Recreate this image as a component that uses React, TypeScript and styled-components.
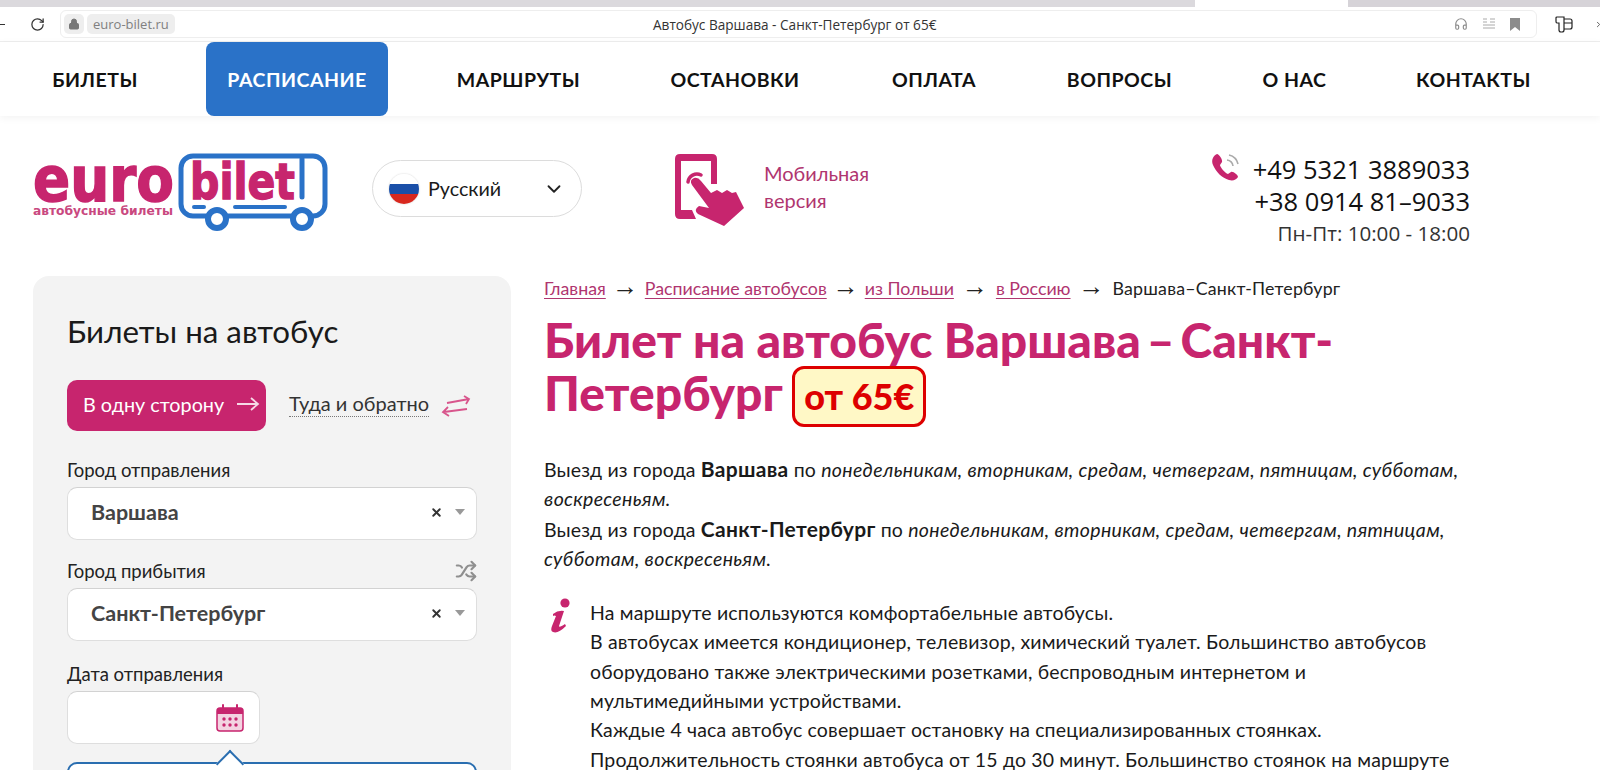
import React from 'react';
import styled, { createGlobalStyle } from 'styled-components';
import { ChevronDown, ChevronRight, Headphones, Lock, RotateCw, Shuffle, X } from 'lucide-react';

const BODY_FONT = `Lato, "Noto Sans", "Open Sans", sans-serif`;
const PINK = '#c7256e';
const BLUE = '#2a72c8';

const GlobalStyle = createGlobalStyle`
  html, body {
    margin: 0;
    padding: 0;
    height: 770px;
    overflow: hidden;
    background: #fff;
    font-family: ${BODY_FONT};
    color: #1a1a1a;
  }
  * { box-sizing: border-box; }
`;

const Page = styled.div`
  width: 1600px;
  height: 770px;
  overflow: hidden;
  display: flex;
  flex-direction: column;
`;

const TabStrip = styled.div`
  height: 7px;
  flex: none;
  display: flex;
  background: #d9d7db;
`;
const TabSpacer = styled.div<{ $w: number; $bg: string }>`
  width: ${({ $w }) => $w}px;
  background: ${({ $bg }) => $bg};
`;

const BrowserBar = styled.div`
  height: 35px;
  flex: none;
  display: flex;
  align-items: center;
  padding-left: 30px;
  background: #fff;
  border-bottom: 1px solid #eee;
  position: relative;
`;
const ReloadIcon = styled(RotateCw)`
  color: #333;
  margin-right: 15px;
  flex: none;
`;
const BackStub = styled.div`
  position: absolute;
  left: 0;
  top: 17px;
  width: 5px;
  height: 1px;
  background: #333;
`;
const EdgeChevron = styled(ChevronRight)`
  position: absolute;
  right: -3px;
  top: 13px;
  color: #333;
`;
const AddressBar = styled.div`
  width: 1477px;
  height: 28px;
  border: 1px solid #eeeeee;
  border-radius: 6px;
  display: flex;
  align-items: center;
  padding: 0 16px 0 3px;
  gap: 3px;
  position: relative;
  flex: none;
`;
const LockBox = styled.div`
  width: 20px;
  height: 20px;
  background: #eeeeee;
  border-radius: 5px;
  display: flex;
  align-items: center;
  justify-content: center;
  color: #777;
`;
const Domain = styled.div`
  background: #eeeeee;
  border-radius: 5px;
  height: 20px;
  padding: 0 6px;
  font: 13px/20px "Open Sans", sans-serif;
  color: #808080;
`;
const PageTitle = styled.div`
  position: absolute;
  left: 592px;
  font: 13.6px "Open Sans", sans-serif;
  color: #333;
`;
const BarIcons = styled.div`
  margin-left: auto;
  display: flex;
  align-items: center;
  gap: 14px;
  color: #8c8c8c;
`;
const SideIcon = styled.svg`
  margin-left: 18px;
  flex: none;
`;

const Nav = styled.nav`
  height: 74px;
  flex: none;
  display: flex;
  padding-left: 34px;
  gap: 50px;
  background: #fff;
  box-shadow: 0 2px 8px rgba(0, 0, 0, 0.05);
  position: relative;
`;
const NavItem = styled.a<{ $active?: boolean; $w: number }>`
  width: ${({ $w }) => $w}px;
  flex: none;
  display: flex;
  align-items: center;
  justify-content: center;
  font-size: 19.5px;
  font-weight: 700;
  letter-spacing: 0.5px;
  border-radius: 8px;
  color: ${({ $active }) => ($active ? '#fff' : '#111')};
  background: ${({ $active }) => ($active ? BLUE : 'transparent')};
`;

const Header = styled.header`
  height: 160px;
  flex: none;
  display: flex;
  align-items: flex-start;
  padding: 37px 130px 0 32px;
`;
const LangPill = styled.div`
  width: 210px;
  height: 57px;
  margin: 7px 0 0 44px;
  border: 1px solid #dcdcdc;
  border-radius: 29px;
  display: flex;
  align-items: center;
  padding: 0 16px 0 16px;
  font-size: 19.7px;
  flex: none;
`;
const Flag = styled.div`
  width: 30px;
  height: 30px;
  border-radius: 50%;
  margin-right: 9px;
  background: linear-gradient(#fff 0 33%, #1a4fa8 33% 66%, #d8281e 66%);
  box-shadow: 0 0 2px #ccc;
  flex: none;
`;
const LangChevron = styled(ChevronDown)`
  margin-left: auto;
  color: #222;
`;
const MobileLink = styled.div`
  margin: 1px 0 0 92px;
  display: flex;
  gap: 20px;
  flex: none;
`;
const MobileText = styled.div`
  margin-top: 6px;
  color: #b0356f;
  font-size: 20px;
  line-height: 27px;
`;
const Contacts = styled.div`
  margin-left: auto;
  display: flex;
  gap: 12px;
`;
const PhoneLines = styled.div`
  text-align: right;
  font-family: "Open Sans", sans-serif;
`;
const PhoneNumber = styled.div`
  font-size: 25.5px;
  line-height: 32px;
  color: #111;
`;
const Hours = styled.div`
  font-size: 20.6px;
  line-height: 32px;
  color: #333;
`;

const Main = styled.main`
  flex: 1;
  display: flex;
  gap: 33px;
  padding-left: 33px;
  min-height: 0;
`;

const Sidebar = styled.aside`
  width: 478px;
  flex: none;
  background: #f3f3f3;
  border-radius: 16px 16px 0 0;
  padding: 35px 34px 0;
`;
const SideTitle = styled.h2`
  margin: 0;
  font-size: 31.3px;
  line-height: 40px;
  font-weight: 400;
  color: #1a1a1a;
`;
const TripRow = styled.div`
  display: flex;
  align-items: center;
  margin-top: 29px;
`;
const OneWayButton = styled.div`
  width: 199px;
  height: 51px;
  background: ${PINK};
  border-radius: 10px;
  color: #fff;
  display: flex;
  align-items: center;
  justify-content: space-between;
  padding: 0 6px 3px 16px;
  font-size: 19.8px;
`;
const RoundTrip = styled.span`
  margin: -4px 0 0 23px;
  font-size: 20px;
  line-height: 25px;
  color: #333;
  border-bottom: 1px dotted #777;
`;
const SwapIcon = styled.svg`
  margin-left: 12px;
`;
const FieldLabelRow = styled.div<{ $top: number }>`
  display: flex;
  justify-content: space-between;
  align-items: center;
  margin-top: ${({ $top }) => $top}px;
  height: 24px;
  font-size: 18.5px;
  color: #222;
`;
const ShuffleIcon = styled(Shuffle)`
  color: #8f8f8f;
`;
const SelectBox = styled.div`
  height: 53px;
  margin-top: 5px;
  background: #fff;
  border: 1px solid #dedede;
  border-top-color: #d2d2d2;
  border-radius: 10px;
  display: flex;
  align-items: center;
  padding: 0 11px 3px 23px;
  font-size: 21.5px;
  font-weight: 700;
  color: #444;
`;
const ClearIcon = styled(X)`
  margin-left: auto;
  color: #333;
`;
const Caret = styled.span`
  margin-left: 12px;
  border: 5px solid transparent;
  border-top: 6px solid #999;
  border-bottom: 0;
`;
const DateBox = styled(SelectBox)`
  width: 193px;
  padding: 0 15px 0 0;
  justify-content: flex-end;
`;
const Popover = styled.div`
  height: 40px;
  margin-top: 18px;
  background: #fff;
  border: 2px solid #2a6eb0;
  border-radius: 10px 10px 0 0;
  position: relative;
  &::before {
    content: '';
    position: absolute;
    left: 151px;
    top: -10px;
    width: 18px;
    height: 18px;
    background: #fff;
    border: 2px solid #2a6eb0;
    border-right: 0;
    border-bottom: 0;
    transform: rotate(45deg);
  }
`;

const Content = styled.section`
  width: 926px;
  flex: none;
  padding-top: 1px;
`;
const Crumbs = styled.div`
  display: flex;
  align-items: center;
  height: 22px;
  font-size: 17.8px;
  color: #222;
`;
const CrumbLink = styled.a`
  color: #b0356f;
  text-decoration: underline;
  text-underline-offset: 3px;
`;
const CrumbArrow = styled.span<{ $w: number }>`
  width: ${({ $w }) => $w}px;
  margin-top: -5px;
  text-align: center;
  font-family: "Liberation Sans", sans-serif;
  font-size: 26px;
  line-height: 18px;
  font-weight: 400;
`;
const CrumbCurrent = styled.span`
  letter-spacing: 0.2px;
`;
const Title = styled.h1`
  margin: 14px 0 0;
  font-size: 48px;
  line-height: 53px;
  font-weight: 900;
  color: ${PINK};
`;
const PriceBadge = styled.span`
  display: inline-block;
  height: 61px;
  padding: 0 9px;
  margin: -6px 0 -6px -2px;
  font-size: 36px;
  line-height: 55px;
  font-weight: 900;
  color: #dd0000;
  background: #fff8c6;
  border: 3px solid #dd0000;
  border-radius: 12px;
  vertical-align: 1px;
`;
const Para = styled.p`
  margin: 33px 0 0;
  font-size: 19.5px;
  line-height: 29.3px;
  letter-spacing: 0.15px;
  color: #1a1a1a;
  b {
    font-size: 21px;
    letter-spacing: 0.3px;
  }
  i {
    letter-spacing: 0.35px;
  }
`;
const InfoRow = styled.div`
  display: flex;
  gap: 14px;
  margin-top: 25px;
`;
const InfoIcon = styled.svg`
  width: 32px;
  height: 36px;
  flex: none;
`;
const InfoText = styled.div`
  width: 860px;
  font-size: 19.5px;
  line-height: 29.3px;
  letter-spacing: 0.15px;
  color: #1a1a1a;
`;

const Logo = () => (
  <svg width="296" height="80" viewBox="0 0 296 80" style={{ flex: 'none' }}>
    <text x="1" y="48" fontFamily="'DejaVu Sans', sans-serif" fontWeight="700" fontSize="62" fill={PINK} stroke={PINK} strokeWidth="1.5" textLength="141" lengthAdjust="spacingAndGlyphs">euro</text>
    <text x="1" y="62" fontFamily="'DejaVu Sans', sans-serif" fontWeight="700" fontSize="12" fill="#c9487f" textLength="140" lengthAdjust="spacingAndGlyphs">автобусные билеты</text>
    <rect x="149" y="3" width="144" height="60" rx="12" fill="#fff" stroke={BLUE} strokeWidth="5" />
    <path d="M162 54H172M203 54H253" stroke={BLUE} strokeWidth="4" strokeLinecap="round" />
    <path d="M270 6V44" stroke={BLUE} strokeWidth="5" strokeLinecap="round" />
    <circle cx="185" cy="66" r="9" fill="#fff" stroke={BLUE} strokeWidth="6" />
    <circle cx="270" cy="66" r="9" fill="#fff" stroke={BLUE} strokeWidth="6" />
    <text x="158" y="46" fontFamily="'DejaVu Sans', sans-serif" fontWeight="700" fontSize="50" fill={PINK} stroke={PINK} strokeWidth="1.4" textLength="105" lengthAdjust="spacingAndGlyphs">bilet</text>
  </svg>
);

const MobileIcon = () => (
  <svg width="70" height="72" viewBox="0 0 70 72">
    <path d="M6 0H38Q43 0 43 5V30H37V7H7V56H18L22 65H6Q1 65 1 60V5Q1 0 6 0Z" fill={PINK} />
    <path d="M14 28A9 9 0 0 1 27 21" fill="none" stroke={PINK} strokeWidth="3.5" strokeLinecap="round" />
    <path d="M18 31Q15 26 20 24Q24 23 27 27L37 39L43 36L48 39L53 36L58 39L62 38L70 54L50 72L24 60Q19 56 25 52L35 54Z" fill={PINK} />
  </svg>
);

const PhoneIcon = () => (
  <svg width="30" height="30" viewBox="0 0 30 30">
    <path d="M6 1C2 3 0 7 2 12C5 19 11 25 18 27C22 28 25 27 27 24C27 22 22 18 20 19L17 21C14 20 9 14 9 12L11 9C12 7 8 1 6 1Z" fill={PINK} />
    <path d="M16 7A7 7 0 0 1 22 13M18 2A12 12 0 0 1 27 11" fill="none" stroke="#aaa" strokeWidth="1.6" />
  </svg>
);

const CalendarIcon = () => (
  <svg width="28" height="28" viewBox="0 0 28 28">
    <rect x="1" y="4" width="26" height="23" rx="3" fill="#f3d3e1" stroke={PINK} strokeWidth="1.5" />
    <path d="M1 7Q1 4 4 4H24Q27 4 27 7V10H1Z" fill={PINK} />
    <path d="M7 1V6M21 1V6" stroke={PINK} strokeWidth="2" strokeLinecap="round" />
    {[8, 14, 20].map((x) => [15, 21].map((y) => <circle key={`${x}-${y}`} cx={x} cy={y} r="1.7" fill={PINK} />))}
  </svg>
);

const ArrowRight = () => (
  <svg width="24" height="16" viewBox="0 0 24 16" fill="none" stroke="#f6d9e6" strokeWidth="1.8">
    <path d="M1 8H22M15 2L22 8L15 14" />
  </svg>
);

const NAV_ITEMS = [
  { label: 'БИЛЕТЫ', w: 122 },
  { label: 'РАСПИСАНИЕ', w: 182, active: true },
  { label: 'МАРШРУТЫ', w: 161 },
  { label: 'ОСТАНОВКИ', w: 172 },
  { label: 'ОПЛАТА', w: 126 },
  { label: 'ВОПРОСЫ', w: 145 },
  { label: 'О НАС', w: 105 },
  { label: 'КОНТАКТЫ', w: 153 },
];

export default function App() {
  return (
    <Page>
      <GlobalStyle />
      <TabStrip>
        <TabSpacer $w={1195} $bg="#dbd9dd" />
        <TabSpacer $w={153} $bg="#ffffff" />
        <TabSpacer $w={252} $bg="#d6d3d8" />
      </TabStrip>
      <BrowserBar>
        <BackStub />
        <ReloadIcon size={15} />
        <AddressBar>
          <LockBox><Lock size={12} fill="#777" /></LockBox>
          <Domain>euro-bilet.ru</Domain>
          <PageTitle>Автобус Варшава - Санкт-Петербург от 65€</PageTitle>
          <BarIcons>
            <Headphones size={14} />
            <svg width="14" height="12" viewBox="0 0 14 12" fill="none" stroke="#aaa"><path d="M1 1H5M1 4H5M8 1H13M8 4H13M1 7H13M1 10H13" /></svg>
            <svg width="10" height="13" viewBox="0 0 10 13"><path d="M0 0H10V13L5 9L0 13Z" fill="#8c8c8c" /></svg>
          </BarIcons>
        </AddressBar>
        <SideIcon width="18" height="18" viewBox="0 0 18 18" fill="none" stroke="#222" strokeWidth="1.2">
          <path d="M2 2H9V15Q9 17 7 17H6Q4 17 4 15V8H2Q1 8 1 6V3Q1 2 2 2ZM9 4H15Q17 4 17 6V12Q17 14 15 14H9M9 8H17" />
        </SideIcon>
        <EdgeChevron size={9} strokeWidth={2} />
      </BrowserBar>
      <Nav>
        {NAV_ITEMS.map((item) => (
          <NavItem key={item.label} $active={item.active} $w={item.w}>{item.label}</NavItem>
        ))}
      </Nav>
      <Header>
        <Logo />
        <LangPill>
          <Flag />
          Русский
          <LangChevron size={22} />
        </LangPill>
        <MobileLink>
          <MobileIcon />
          <MobileText>Мобильная<br />версия</MobileText>
        </MobileLink>
        <Contacts>
          <PhoneIcon />
          <PhoneLines>
            <PhoneNumber>+49 5321 3889033</PhoneNumber>
            <PhoneNumber>+38 0914 81–9033</PhoneNumber>
            <Hours>Пн-Пт: 10:00 - 18:00</Hours>
          </PhoneLines>
        </Contacts>
      </Header>
      <Main>
        <Sidebar>
          <SideTitle>Билеты на автобус</SideTitle>
          <TripRow>
            <OneWayButton>В одну сторону <ArrowRight /></OneWayButton>
            <RoundTrip>Туда и обратно</RoundTrip>
            <SwapIcon width="30" height="22" viewBox="0 0 30 22" fill="none" stroke="#d8558c" strokeWidth="1.8">
              <path d="M6 8L28 4M23 1L28 4L25 9M26 14L3 17M7 12L2 17L8 21" />
            </SwapIcon>
          </TripRow>
          <FieldLabelRow $top={27}>Город отправления</FieldLabelRow>
          <SelectBox>
            Варшава
            <ClearIcon size={13} strokeWidth={3.5} />
            <Caret />
          </SelectBox>
          <FieldLabelRow $top={19}>
            Город прибытия
            <ShuffleIcon size={22} strokeWidth={2.4} />
          </FieldLabelRow>
          <SelectBox>
            Санкт-Петербург
            <ClearIcon size={13} strokeWidth={3.5} />
            <Caret />
          </SelectBox>
          <FieldLabelRow $top={21}>Дата отправления</FieldLabelRow>
          <DateBox><CalendarIcon /></DateBox>
          <Popover />
        </Sidebar>
        <Content>
          <Crumbs>
            <CrumbLink>Главная</CrumbLink>
            <CrumbArrow $w={39}>→</CrumbArrow>
            <CrumbLink>Расписание автобусов</CrumbLink>
            <CrumbArrow $w={38}>→</CrumbArrow>
            <CrumbLink>из Польши</CrumbLink>
            <CrumbArrow $w={42}>→</CrumbArrow>
            <CrumbLink>в Россию</CrumbLink>
            <CrumbArrow $w={42}>→</CrumbArrow>
            <CrumbCurrent>Варшава–Санкт-Петербург</CrumbCurrent>
          </Crumbs>
          <Title>
            Билет на автобус Варшава{'\u2009'}–{'\u2009'}Санкт-<br />Петербург <PriceBadge>от 65€</PriceBadge>
          </Title>
          <Para>
            Выезд из города <b>Варшава</b> по <i>понедельникам, вторникам, средам, четвергам, пятницам, субботам, воскресеньям.</i><br />
            Выезд из города <b>Санкт-Петербург</b> по <i>понедельникам, вторникам, средам, четвергам, пятницам, субботам, воскресеньям.</i>
          </Para>
          <InfoRow>
            <InfoIcon viewBox="0 0 32 36">
              <circle cx="21" cy="5" r="4.6" fill={PINK} />
              <path d="M9 16Q14 12 20 13L15 28Q15 30 21 26L22 28Q14 36 9 34Q6 33 8 28L12 18Q10 17 9 18Z" fill={PINK} />
            </InfoIcon>
            <InfoText>
              На маршруте используются комфортабельные автобусы.<br />
              В автобусах имеется кондиционер, телевизор, химический туалет. Большинство автобусов оборудовано также электрическими розетками, беспроводным интернетом и мультимедийными устройствами.<br />
              Каждые 4 часа автобус совершает остановку на специализированных стоянках.<br />
              Продолжительность стоянки автобуса от 15 до 30 минут. Большинство стоянок на маршруте
            </InfoText>
          </InfoRow>
        </Content>
      </Main>
    </Page>
  );
}
